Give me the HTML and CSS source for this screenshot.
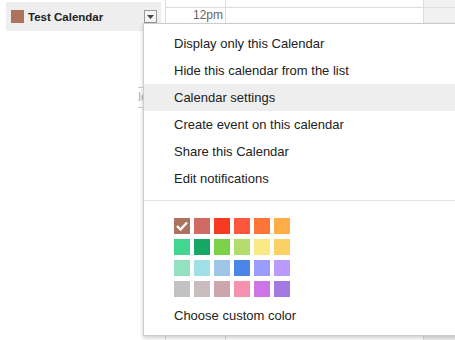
FILE: index.html
```html
<!DOCTYPE html>
<html>

<head>
    <title>Test Calendar</title>
    <link rel="stylesheet" href="styles.css">
</head>

<body>
    <div class="page">
        <div class="sidebar">
            <div class="cal-row">
                <span class="cal-color"></span>
                <span class="cal-name">Test Calendar</span>
                <span class="drop-btn">
                    <svg width="7" height="4" viewBox="0 0 7 4"><path d="M0 0h7L3.5 4z" fill="#444"/></svg>
                </span>
            </div>
            <div class="add-cal">Calendar</div>
        </div>

        <div class="grid">
            <div class="grid-row first">
                <div class="time"></div>
                <div class="day"></div>
                <div class="side"></div>
            </div>
            <div class="grid-row">
                <div class="time">12pm</div>
                <div class="day"></div>
                <div class="side"></div>
            </div>
            <div class="grid-row tall">
                <div class="time"></div>
                <div class="day"></div>
                <div class="side"></div>
            </div>
        </div>

        <!-- calendar options menu -->
        <div class="menu">
            <div class="item">Display only this Calendar</div>
            <div class="item">Hide this calendar from the list</div>
            <div class="item active">Calendar settings</div>
            <div class="item">Create event on this calendar</div>
            <div class="item">Share this Calendar</div>
            <div class="item">Edit notifications</div>
            <div class="sep"></div>
            <div class="palette">
                <span class="chip checked" style="background:#ac725e">
                    <svg width="12" height="10" viewBox="0 0 12 10"><path d="M1 5l3.5 3.5L11 1.5" stroke="#fff" stroke-width="2.4" fill="none"/></svg>
                </span>
                <span class="chip" style="background:#d06b64"></span>
                <span class="chip" style="background:#f83a22"></span>
                <span class="chip" style="background:#fa573c"></span>
                <span class="chip" style="background:#ff7537"></span>
                <span class="chip" style="background:#ffad46"></span>
                <span class="chip" style="background:#42d692"></span>
                <span class="chip" style="background:#16a765"></span>
                <span class="chip" style="background:#7bd148"></span>
                <span class="chip" style="background:#b3dc6c"></span>
                <span class="chip" style="background:#fbe983"></span>
                <span class="chip" style="background:#fad165"></span>
                <span class="chip" style="background:#92e1c0"></span>
                <span class="chip" style="background:#9fe1e7"></span>
                <span class="chip" style="background:#9fc6e7"></span>
                <span class="chip" style="background:#4986e7"></span>
                <span class="chip" style="background:#9a9cff"></span>
                <span class="chip" style="background:#b99aff"></span>
                <span class="chip" style="background:#c2c2c2"></span>
                <span class="chip" style="background:#cabdbf"></span>
                <span class="chip" style="background:#cca6ac"></span>
                <span class="chip" style="background:#f691b2"></span>
                <span class="chip" style="background:#cd74e6"></span>
                <span class="chip" style="background:#a47ae2"></span>
            </div>
            <div class="item">Choose custom color</div>
        </div>
    </div>
</body>

</html>
```

FILE: styles.css
```css
body {
    margin: 0;
    font-family: "Liberation Sans", Arial, sans-serif;
    background-color: white;
    overflow: hidden;
}

.page {
    position: relative;
    display: flex;
    width: 455px;
    height: 340px;
    overflow: hidden;
}

.sidebar {
    width: 155px;
    padding: 2px 4px 0 6px;
    flex-shrink: 0;
}

.cal-row {
    display: flex;
    align-items: center;
    height: 29px;
    padding-left: 5px;
    background-color: #eeeeee;
}

.cal-color {
    width: 13px;
    height: 13px;
    background-color: #ac725e;
    margin-right: 4px;
}

.cal-name {
    flex-grow: 1;
    font-size: 11.5px;
    font-weight: bold;
    color: #222;
}

.drop-btn {
    display: flex;
    align-items: center;
    justify-content: center;
    width: 11px;
    height: 11px;
    margin-right: 4px;
    border: 1px solid #999;
    background-color: #f4f4f4;
}

.add-cal {
    margin: 56px 0 0 132px;
    height: 19px;
    line-height: 19px;
    overflow: hidden;
    border-top: 1px solid #ccc;
    border-bottom: 1px solid #ccc;
    font-size: 12px;
    color: #b8aca6;
    white-space: nowrap;
    text-indent: -15px;
}

.grid {
    flex-grow: 1;
}

.grid-row {
    display: flex;
    height: 15px;
    border-bottom: 1px solid #ddd;
}

.grid-row.first {
    height: 7px;
}

.grid-row.tall {
    height: 330px;
}

.time {
    width: 57px;
    padding-right: 2px;
    border-left: 1px solid #ddd;
    border-right: 1px solid #ddd;
    text-align: right;
    font-size: 12px;
    line-height: 15px;
    color: #666;
}

.day {
    width: 197px;
    border-right: 1px solid #ddd;
}

.side {
    flex-grow: 1;
    background-color: #f1f1f1;
}

.menu {
    position: absolute;
    left: 143px;
    top: 23px;
    width: 330px;
    padding: 6px 0;
    background-color: white;
    border: 1px solid #ccc;
    box-shadow: 0 2px 4px rgba(0, 0, 0, 0.2);
}

.item {
    height: 27px;
    line-height: 27px;
    padding-left: 30px;
    font-size: 13px;
    color: #222;
}

.item.active {
    background-color: #eeeeee;
}

.sep {
    margin: 8px 0 17px;
    border-top: 1px solid #e5e5e5;
}

.palette {
    display: grid;
    grid-template-columns: repeat(6, 16px);
    column-gap: 4px;
    row-gap: 5px;
    padding-left: 30px;
    margin-bottom: 5px;
}

.chip {
    display: flex;
    align-items: center;
    justify-content: center;
    width: 16px;
    height: 16px;
}
```
